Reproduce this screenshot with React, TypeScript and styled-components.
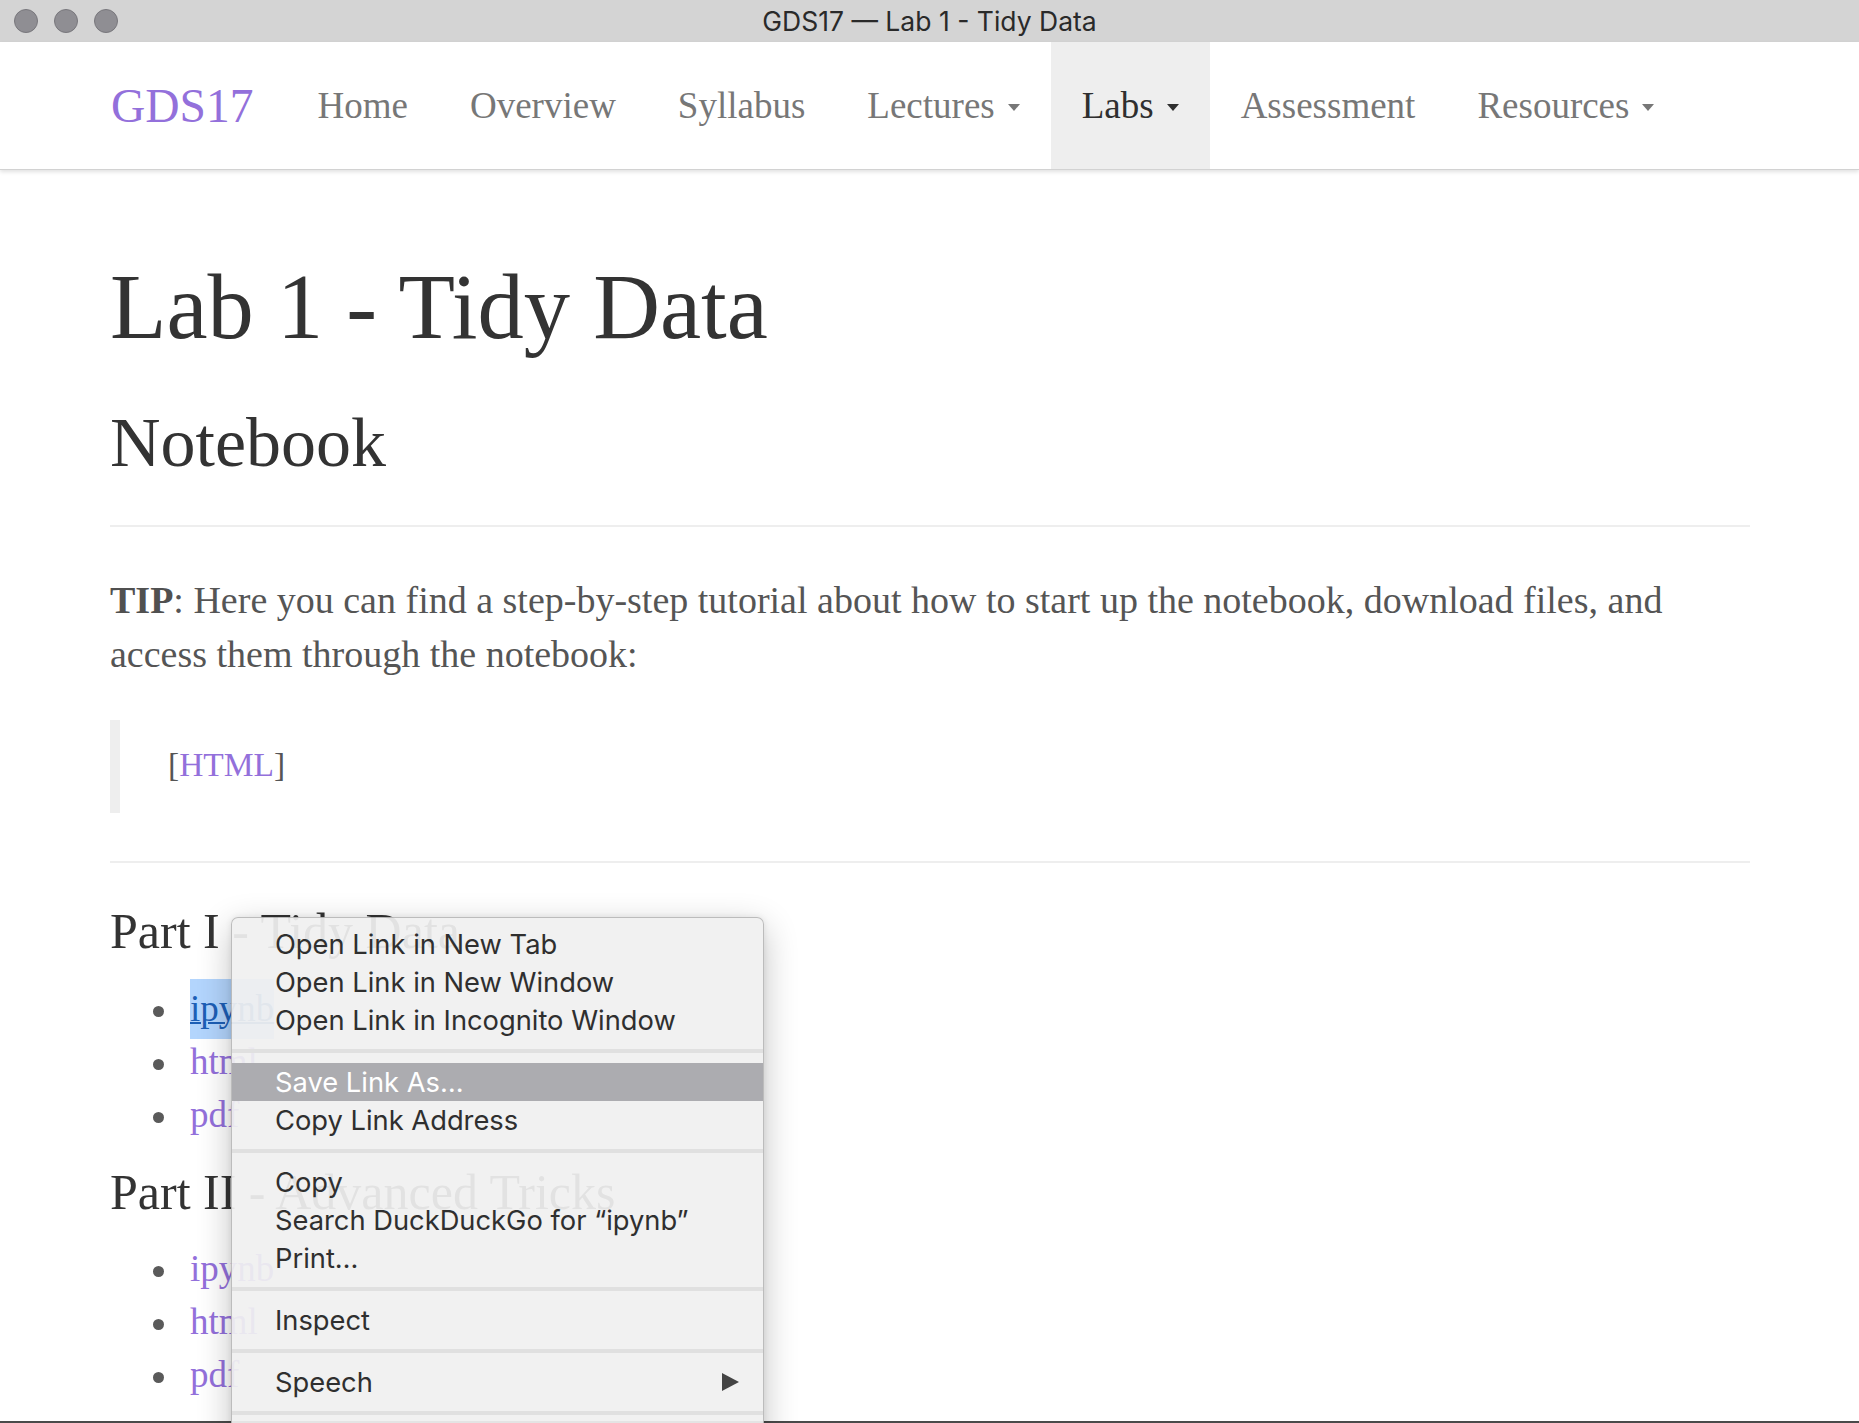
import React from "react";
import styled, { createGlobalStyle } from "styled-components";

const GlobalStyle = createGlobalStyle`
  html, body { margin: 0; padding: 0; background: #ffffff; }
  body { overflow: hidden; }
  * { box-sizing: border-box; }
`;

const serif = `"Liberation Serif", "Times New Roman", serif`;
const ui = `Inter, "Liberation Sans", Arial, sans-serif`;

const Screen = styled.div`
  position: relative;
  width: 1859px;
  height: 1423px;
  overflow: hidden;
  background: #ffffff;
`;

const Window = styled.div`
  display: flex;
  flex-direction: column;
  height: 100%;
  overflow: hidden;
  border-bottom: 2px solid #4a4a4a;
`;

const TitleBar = styled.div`
  flex: none;
  height: 42px;
  background: #d4d4d4;
  display: grid;
  grid-template-columns: 1fr auto 1fr;
  align-items: center;
  padding: 0 14px;
`;

const Lights = styled.div`
  display: flex;
  gap: 16px;
`;

const Light = styled.span`
  width: 24px;
  height: 24px;
  border-radius: 50%;
  background: #8f8e93;
  border: 1px solid #78777c;
`;

const Title = styled.div`
  font-family: ${ui};
  font-size: 26.5px;
  color: #2a2a2a;
`;

const NavBar = styled.nav`
  flex: none;
  position: relative;
  z-index: 1;
  height: 128px;
  display: flex;
  align-items: stretch;
  padding-left: 111px;
  background: #ffffff;
  border-bottom: 1px solid #d2d2d2;
  box-shadow: 0 2px 4px rgba(0, 0, 0, 0.12);
  font-family: ${serif};
`;

const Brand = styled.a`
  display: flex;
  align-items: center;
  margin-right: 33px;
  font-size: 47.5px;
  color: #9370db;
  text-decoration: none;
`;

const NavItem = styled.a<{ $active?: boolean }>`
  display: flex;
  align-items: center;
  padding: 0 31px;
  font-size: 37px;
  color: ${(p) => (p.$active ? "#2f2f2f" : "#777777")};
  background: ${(p) => (p.$active ? "#eeeeee" : "transparent")};
  text-decoration: none;
`;

const Caret = styled.span`
  display: inline-block;
  margin-left: 13px;
  margin-top: 4px;
  border-top: 7px solid currentColor;
  border-left: 6px solid transparent;
  border-right: 6px solid transparent;
`;

const Main = styled.main`
  flex: none;
  padding: 0 109px 0 110px;
  font-family: ${serif};
`;

const H1 = styled.h1`
  margin: 88px 0 0;
  font-size: 92.5px;
  line-height: 99px;
  font-weight: normal;
  color: #333333;
`;

const H2 = styled.h2`
  margin: 47px 0 0;
  font-size: 70px;
  line-height: 77px;
  font-weight: normal;
  color: #333333;
`;

const H3 = styled.h3<{ $gap: number }>`
  margin: ${(p) => p.$gap}px 0 0;
  font-size: 50px;
  line-height: 55px;
  font-weight: normal;
  color: #333333;
`;

const Rule = styled.hr<{ $gap: number }>`
  margin: ${(p) => p.$gap}px 0 0;
  border: 0;
  border-top: 2px solid #eeeeee;
  height: 0;
`;

const Para = styled.p`
  margin: 46px 0 0;
  font-size: 38px;
  line-height: 54px;
  color: #555555;
`;

const Strong = styled.strong`
  font-weight: bold;
  color: #505050;
`;

const Quote = styled.blockquote`
  margin: 39px 0 0;
  padding: 18px 0 21px 48px;
  border-left: 10px solid #eeeeee;
  font-size: 33.5px;
  line-height: 54px;
  color: #555555;
`;

const Link = styled.a<{ $selected?: boolean }>`
  color: ${(p) => (p.$selected ? "#1d5fb6" : "#9370db")};
  text-decoration: ${(p) => (p.$selected ? "underline" : "none")};
  text-decoration-thickness: 2px;
  background: ${(p) => (p.$selected ? "#b3d5fd" : "transparent")};
  padding: ${(p) => (p.$selected ? "3px 0 4px" : "0")};
`;

const List = styled.ul<{ $gap: number }>`
  margin: ${(p) => p.$gap}px 0 0;
  padding: 0;
  list-style: none;
`;

const Item = styled.li`
  height: 53px;
  display: flex;
  align-items: center;
  font-size: 37px;
  line-height: 53px;
`;

const Bullet = styled.span`
  flex: none;
  width: 11px;
  height: 11px;
  margin: 5px 26px 0 43px;
  border-radius: 50%;
  background: #5a5a5a;
`;

const Menu = styled.div`
  position: absolute;
  z-index: 5;
  top: 917px;
  left: 231px;
  width: 533px;
  padding-top: 7px;
  border: 1px solid rgba(0, 0, 0, 0.22);
  border-radius: 7px;
  background: rgba(240, 240, 240, 0.93);
  box-shadow: 0 10px 34px rgba(0, 0, 0, 0.24), 0 0 6px rgba(0, 0, 0, 0.08);
  font-family: ${ui};
  font-size: 27.3px;
  overflow: hidden;
`;

const MenuItem = styled.div<{ $hot?: boolean }>`
  height: 38px;
  display: flex;
  align-items: center;
  justify-content: space-between;
  padding: 0 24px 0 43px;
  color: ${(p) => (p.$hot ? "#ffffff" : "#2f2f2f")};
  background: ${(p) => (p.$hot ? "#acacb0" : "transparent")};
  white-space: nowrap;
`;

const Separator = styled.div`
  height: 4px;
  margin: 10px 0;
  background: #e0e0e0;
`;

const SubArrow = styled.span`
  width: 0;
  height: 0;
  border-left: 17px solid #444444;
  border-top: 9.5px solid transparent;
  border-bottom: 9.5px solid transparent;
`;

const navItems: { label: string; caret?: boolean; active?: boolean }[] = [
  { label: "Home" },
  { label: "Overview" },
  { label: "Syllabus" },
  { label: "Lectures", caret: true },
  { label: "Labs", caret: true, active: true },
  { label: "Assessment" },
  { label: "Resources", caret: true },
];

type MenuEntry = { label: string; hot?: boolean; sub?: boolean } | "sep";

const menu: MenuEntry[] = [
  { label: "Open Link in New Tab" },
  { label: "Open Link in New Window" },
  { label: "Open Link in Incognito Window" },
  "sep",
  { label: "Save Link As\u2026", hot: true },
  { label: "Copy Link Address" },
  "sep",
  { label: "Copy" },
  { label: "Search DuckDuckGo for \u201Cipynb\u201D" },
  { label: "Print\u2026" },
  "sep",
  { label: "Inspect" },
  "sep",
  { label: "Speech", sub: true },
  "sep",
  { label: "Services", sub: true },
];

function Downloads({ gap, selectedFirst }: { gap: number; selectedFirst?: boolean }) {
  return (
    <List $gap={gap}>
      {["ipynb", "html", "pdf"].map((t, i) => (
        <Item key={t}>
          <Bullet />
          <Link href="#" $selected={selectedFirst && i === 0}>
            {t}
          </Link>
        </Item>
      ))}
    </List>
  );
}

export default function App() {
  return (
    <Screen>
      <GlobalStyle />
      <Window>
        <TitleBar>
          <Lights>
            <Light />
            <Light />
            <Light />
          </Lights>
          <Title>GDS17 — Lab 1 - Tidy Data</Title>
          <span />
        </TitleBar>
        <NavBar>
          <Brand href="#">GDS17</Brand>
          {navItems.map((n) => (
            <NavItem key={n.label} href="#" $active={n.active}>
              {n.label}
              {n.caret && <Caret />}
            </NavItem>
          ))}
        </NavBar>
        <Main>
          <H1>Lab 1 - Tidy Data</H1>
          <H2>Notebook</H2>
          <Rule $gap={44} />
          <Para>
            <Strong>TIP</Strong>: Here you can find a step-by-step tutorial about how to start up the
            notebook, download files, and access them through the notebook:
          </Para>
          <Quote>
            [<Link href="#">HTML</Link>]
          </Quote>
          <Rule $gap={48} />
          <H3 $gap={41}>Part I - Tidy Data</H3>
          <Downloads gap={23} selectedFirst />
          <H3 $gap={24}>Part II - Advanced Tricks</H3>
          <Downloads gap={22} />
        </Main>
      </Window>
      <Menu>
        {menu.map((m, i) =>
          m === "sep" ? (
            <Separator key={i} />
          ) : (
            <MenuItem key={i} $hot={m.hot}>
              <span>{m.label}</span>
              {m.sub && <SubArrow />}
            </MenuItem>
          )
        )}
      </Menu>
    </Screen>
  );
}
